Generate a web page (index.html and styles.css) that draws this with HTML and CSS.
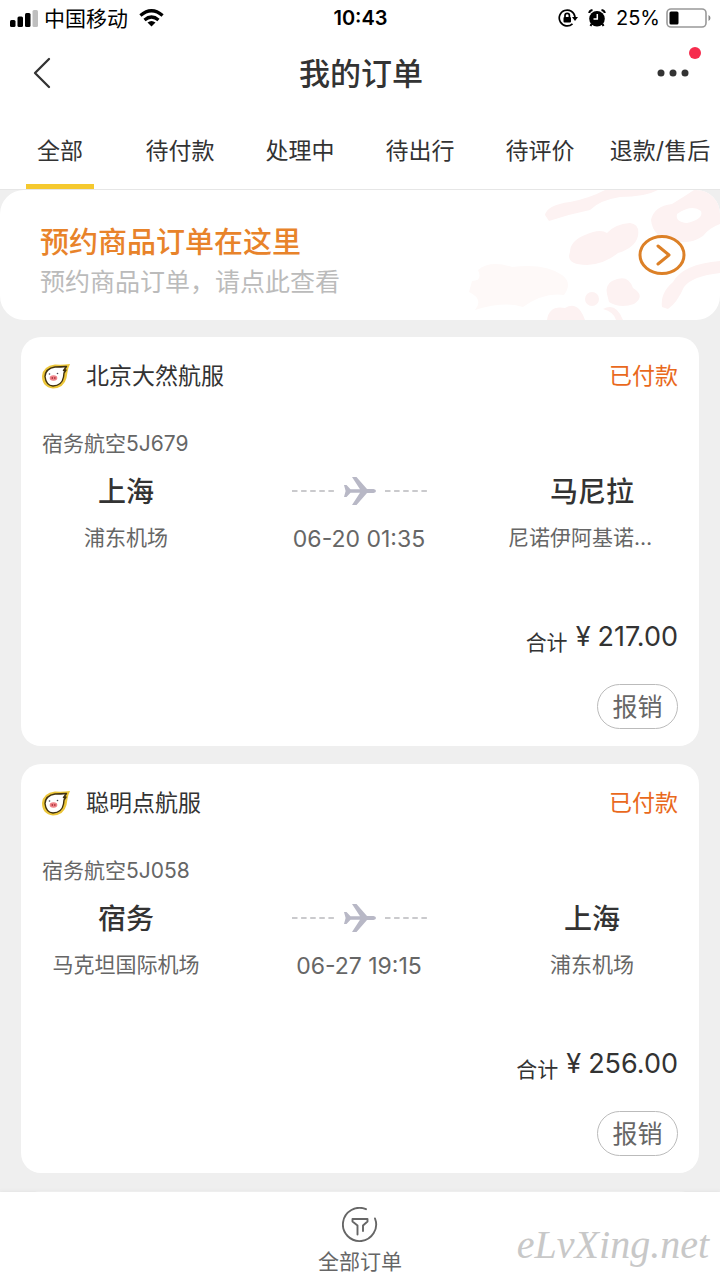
FILE: index.html
```html
<!DOCTYPE html>
<html lang="zh-CN">
<head>
<meta charset="utf-8">
<meta name="viewport" content="width=device-width, initial-scale=1">
<title>我的订单</title>
<link rel="stylesheet" href="styles.css">
</head>
<body>
<svg width="0" height="0" class="defs" aria-hidden="true">
  <symbol id="pig" viewBox="0 0 30 28">
    <path d="M28 2Q21 3 13 2.500Q1 4 0 14Q0 25 11 26.500Q22 26 24.500 16L25.500 10Q26 6 28 2Z" fill="#ecc63a"/>
    <path d="M24.500 4.500Q19 5 13 5Q3.500 6.500 3 14.500Q4 23.500 11 24Q20 23.500 21.500 15L22 11L24 8L21.500 8.500Z" fill="#fff" stroke="#41320f" stroke-width="1.400" stroke-linejoin="round"/>
    <ellipse cx="11.500" cy="16" rx="3.800" ry="2.800" fill="#ee8288"/>
    <path d="M10.300 15v2M12.800 15v2" stroke="#a93640" stroke-width="1.200"/>
    <circle cx="7.500" cy="12" r=".8" fill="#445"/><circle cx="15.500" cy="11.500" r=".8" fill="#445"/>
  </symbol>
  <symbol id="plane" viewBox="0 0 136 32">
    <path d="M1 16h43M94 16h43" stroke="#b9b9bd" stroke-width="1.6" stroke-dasharray="5.500 3.600"/>
    <path d="M53 10h2.500l4 4.300h9.500L61 2h4.500L76 14h6.500Q85 14.500 85 16Q85 17.500 82.500 18H76L65.500 30H61l8-12.300h-9.500L55.500 22H53l1.600-6Z" fill="#b8b8c6"/>
  </symbol>
</svg>
<div class="app">
  <header>
    <div class="status">
      <div class="status-side">
        <svg width="28" height="18" viewBox="0 0 28 18" aria-hidden="true">
          <rect x="0" y="11" width="5.500" height="7" rx="1.500"/><rect x="7.500" y="7.500" width="5.500" height="10.500" rx="1.500"/><rect x="15" y="4" width="5.500" height="14" rx="1.500"/><rect x="22.500" y="1" width="5.500" height="17" rx="1.500" fill="#bfbfbf"/>
        </svg>
        <span class="carrier">中国移动</span>
        <svg width="25" height="18" viewBox="0 0 25 18" fill="none" stroke="#000" stroke-width="3.200" aria-hidden="true">
          <path d="M1.400 6.500Q12.500-3 23.600 6.500M5.500 11Q12.500 5 19.500 11"/><path d="M8.500 13.600Q12.500 10.500 16.500 13.600L12.500 17.500Z" fill="#000" stroke="none"/>
        </svg>
      </div>
      <time class="clock">10:43</time>
      <div class="status-side status-right">
        <svg width="20" height="18" viewBox="0 0 20 18" fill="none" stroke="#000" stroke-width="1.700" aria-hidden="true">
          <path d="M14.500 14.800A7.900 7.900 0 1 1 17 8"/><path d="M14 8h6l-3 4z" fill="#000" stroke="none"/><rect x="5.500" y="8" width="7.500" height="5.500" rx="1" fill="#000" stroke="none"/><path d="M7 8V6.500a2.200 2.200 0 0 1 4.400 0V8"/>
        </svg>
        <svg class="alarm" width="18" height="18" viewBox="0 0 18 18" aria-hidden="true">
          <circle cx="9" cy="9.700" r="7.800"/><path d="M3.500 15l-1 2M14.500 15l1 2M1.200 4Q1.500 1.500 4.500 1M16.800 4Q16.500 1.500 13.500 1" fill="none" stroke="#000" stroke-width="2"/><path d="M9.300 5v5H5.500" fill="none" stroke="#fff" stroke-width="1.500"/>
        </svg>
        <span class="percent">25%</span>
        <svg width="45" height="20" viewBox="0 0 45 20" aria-hidden="true">
          <rect x="1" y="1" width="39" height="18" rx="4" fill="#fff" stroke="#999" stroke-width="1.600"/><rect x="3.500" y="3.500" width="9" height="13" rx="1.500"/><path d="M42.500 7q2 1 2 3t-2 3z" fill="#888"/>
        </svg>
      </div>
    </div>
    <div class="nav">
      <button class="icon-button" type="button" aria-label="返回">
        <svg width="18" height="32" viewBox="0 0 18 32" fill="none" stroke="#333" stroke-width="2.300" stroke-linecap="round" stroke-linejoin="round"><path d="M16 2L2 16L16 30"/></svg>
      </button>
      <h1>我的订单</h1>
      <button class="icon-button more" type="button" aria-label="更多">
        <svg width="32" height="8" viewBox="0 0 32 8" fill="#333"><circle cx="4" cy="4" r="3.500"/><circle cx="16" cy="4" r="3.500"/><circle cx="28" cy="4" r="3.500"/></svg>
        <span class="dot"></span>
      </button>
    </div>
    <nav class="tabs">
      <a class="tab active" href="#all">全部</a>
      <a class="tab" href="#pay">待付款</a>
      <a class="tab" href="#processing">处理中</a>
      <a class="tab" href="#travel">待出行</a>
      <a class="tab" href="#review">待评价</a>
      <a class="tab" href="#refund">退款/售后</a>
    </nav>
  </header>
  <main>
    <a class="banner" href="#reserved">
      <svg class="banner-art" width="280" height="130" viewBox="0 0 280 130" aria-hidden="true">
        <g fill="#fdf2f2">
          <path d="M105 25Q107 15 130 12Q150 8 165 0H218Q205 7 180 7Q160 10 150 20Q130 24 109 31Z"/>
          <path d="M130 62Q130 51 145 45Q160 38 167 43Q175 34 190 33Q200 34 198 46Q195 58 178 63Q165 74 147 75Q125 75 130 62Z"/>
          <path fill-rule="evenodd" d="M211 30Q214 16 232 14Q245 6 254 0H268Q279 8 280 22V34Q269 38 263 46Q248 56 232 50Q213 48 211 30ZM237 24Q235 32 247 33Q264 29 261 21Q252 14 237 24Z"/>
          <path d="M222 117Q220 103 233 92Q243 74 280 71V83Q252 86 244 97Q237 113 228 119Z"/>
          <path d="M167 104Q165 95 172 91Q188 83 193 98Q206 106 194 114Q180 119 169 112Z"/>
          <circle cx="152" cy="109" r="7"/>
          <path d="M107 130Q109 115 125 118Q138 110 145 130ZM163 119Q176 112 183 130H176Q174 122 163 119Z"/>
        </g>
        <path d="M38 80Q50 70 72 77Q105 73 122 85Q133 93 124 105Q104 102 83 117Q65 111 35 120Q44 109 29 102L32 91Q43 91 38 80Z" fill="#fef9f8"/>
      </svg>
      <span class="banner-text">
        <strong>预约商品订单在这里</strong>
        <span class="banner-sub">预约商品订单，请点此查看</span>
      </span>
      <svg class="go" width="48" height="42" viewBox="0 0 48 42" fill="none" stroke="#dc8027" stroke-width="3" aria-hidden="true"><ellipse cx="24" cy="21" rx="22" ry="18.500" fill="#fff"/><path d="M20 12L31 21L20 30" stroke-linecap="round" stroke-linejoin="round"/></svg>
    </a>

    <article class="card">
      <div class="card-head">
        <svg width="30" height="28" aria-hidden="true"><use href="#pig"/></svg>
        <h2>北京大然航服</h2>
        <span class="state">已付款</span>
      </div>
      <p class="flight">宿务航空5J679</p>
      <div class="route">
        <div class="place"><strong>上海</strong><span>浦东机场</span></div>
        <div class="leg"><svg width="136" height="32" aria-hidden="true"><use href="#plane"/></svg><time>06-20 01:35</time></div>
        <div class="place"><strong>马尼拉</strong><span class="long">尼诺伊阿基诺…</span></div>
      </div>
      <p class="total"><span class="total-label">合计</span><span class="yen">¥</span><span>217.00</span></p>
      <button class="claim" type="button">报销</button>
    </article>

    <article class="card">
      <div class="card-head">
        <svg width="30" height="28" aria-hidden="true"><use href="#pig"/></svg>
        <h2>聪明点航服</h2>
        <span class="state">已付款</span>
      </div>
      <p class="flight">宿务航空5J058</p>
      <div class="route">
        <div class="place"><strong>宿务</strong><span>马克坦国际机场</span></div>
        <div class="leg"><svg width="136" height="32" aria-hidden="true"><use href="#plane"/></svg><time>06-27 19:15</time></div>
        <div class="place"><strong>上海</strong><span>浦东机场</span></div>
      </div>
      <p class="total"><span class="total-label">合计</span><span class="yen">¥</span><span>256.00</span></p>
      <button class="claim" type="button">报销</button>
    </article>
    <div class="card next"></div>
  </main>
  <footer>
    <button class="filter" type="button">
      <svg width="36" height="36" viewBox="0 0 36 36" fill="none" stroke="#666" stroke-width="1.900" stroke-linecap="round" stroke-linejoin="round" aria-hidden="true"><path d="M24 2.200A16.600 16.600 0 1 0 33 11.500"/><path d="M15.500 27.500V18.500L10.500 14.500V12H25.500V14.500L21 18.500V24"/></svg>
      <span>全部订单</span>
    </button>
    <span class="site">eLvXing.net</span>
  </footer>
</div>
</body>
</html>
```
FILE: styles.css
```css
* { box-sizing: border-box; }
body {
  margin: 0;
  color: #333;
  background: #efefef;
  font-family: Inter, "Noto Sans CJK SC", sans-serif;
}
h1, h2, p { margin: 0; font-weight: 400; }
button { padding: 0; border: 0; background: none; color: inherit; font: inherit; }
a { color: inherit; text-decoration: none; }
svg { display: block; flex: none; }
.defs { position: absolute; }
.app { display: flex; flex-direction: column; height: 100vh; }
header { background: #fff; border-bottom: 1px solid #e6e6e6; }

.status {
  display: grid;
  grid-template-columns: 1fr auto 1fr;
  align-items: center;
  height: 36px;
  padding: 0 9px 0 10px;
  color: #000;
}
.status-side { display: flex; align-items: center; }
.status-right { justify-content: flex-end; }
.carrier { margin: 0 11px 0 6px; padding-top: 2px; font-size: 21px; line-height: 32px; }
.clock { font-size: 20px; font-weight: 600; }
.alarm { margin: 0 10px; }
.percent { margin-right: 6px; font-size: 20px; }

.nav {
  display: flex;
  align-items: center;
  justify-content: space-between;
  height: 74px;
  padding: 0 31px 0 33px;
}
.icon-button { display: flex; align-items: center; width: 34px; height: 44px; }
h1 { padding-top: 2px; font-size: 31px; line-height: 44px; font-weight: 500; }
.more { position: relative; justify-content: flex-end; }
.dot {
  position: absolute;
  top: -4px;
  right: -12px;
  width: 12px;
  height: 12px;
  border-radius: 50%;
  background: #f62c4d;
}
.tabs { display: grid; grid-template-columns: repeat(6, 1fr); }
.tab {
  display: flex;
  flex-direction: column;
  align-items: center;
  height: 79px;
  padding-top: 24px;
  font-size: 23px;
  line-height: 34px;
  white-space: nowrap;
}
.active::after { content: ""; width: 68px; height: 5px; margin-top: auto; background: #f5c92f; }

main { flex: 1; min-height: 0; overflow: hidden; }
.banner {
  position: relative;
  display: flex;
  align-items: center;
  justify-content: space-between;
  height: 130px;
  padding: 0 34px 0 40px;
  overflow: hidden;
  border-radius: 24px;
  background: #fff;
}
.banner-art { position: absolute; top: 0; right: 0; }
.banner-text { display: flex; flex-direction: column; padding-top: 14px; }
.banner strong { color: #e8832a; font-size: 29px; line-height: 40px; font-weight: 500; }
.banner-sub { color: #bbb; font-size: 25px; line-height: 38px; }
.go { position: relative; }

.card {
  margin: 18px 21px 0;
  padding: 0 21px 17px;
  border-radius: 20px;
  background: #fff;
}
.banner + .card { margin-top: 17px; }
.card-head { display: flex; align-items: center; height: 78px; }
h2 { flex: 1; margin-left: 14px; font-size: 23px; line-height: 34px; }
.state { color: #e9691d; font-size: 23px; line-height: 34px; }
.flight { margin-top: 14px; color: #666; font-size: 21px; line-height: 30px; }
.route { display: grid; grid-template-columns: 168px 1fr 168px; margin-top: 13px; padding-right: 2px; color: #666; }
.place, .leg { display: flex; flex-direction: column; align-items: center; }
.place { gap: 11px; font-size: 21px; line-height: 30px; }
.place strong { color: #333; font-size: 28px; line-height: 40px; font-weight: 500; }
.long { align-self: flex-start; }
.leg { gap: 17px; padding-top: 3px; font-size: 23px; line-height: 30px; }
.total {
  display: flex;
  justify-content: flex-end;
  margin-top: 63px;
  font-size: 27px;
  line-height: 40px;
}
.total-label { padding-top: 6px; font-size: 21px; }
.yen { margin: 0 7px 0 8px; }
.claim {
  display: block;
  width: 81px;
  height: 45px;
  margin: 21px 0 0 auto;
  border: 1px solid #bbb;
  border-radius: 23px;
  color: #666;
  font-size: 25px;
  line-height: 40px;
}
.next { height: 120px; }

footer {
  position: relative;
  flex: none;
  height: 88px;
  background: #fff;
  box-shadow: 0 -1px 3px #e4e4e4;
}
.filter {
  display: flex;
  flex-direction: column;
  align-items: center;
  gap: 4px;
  margin: 0 auto;
  padding-top: 15px;
  color: #666;
  font-size: 21px;
  line-height: 30px;
}
.site {
  position: absolute;
  right: 11px;
  bottom: 12px;
  color: #c8c8c8;
  font-family: "Liberation Serif", serif;
  font-size: 40px;
  line-height: 46px;
  font-style: italic;
}
```
